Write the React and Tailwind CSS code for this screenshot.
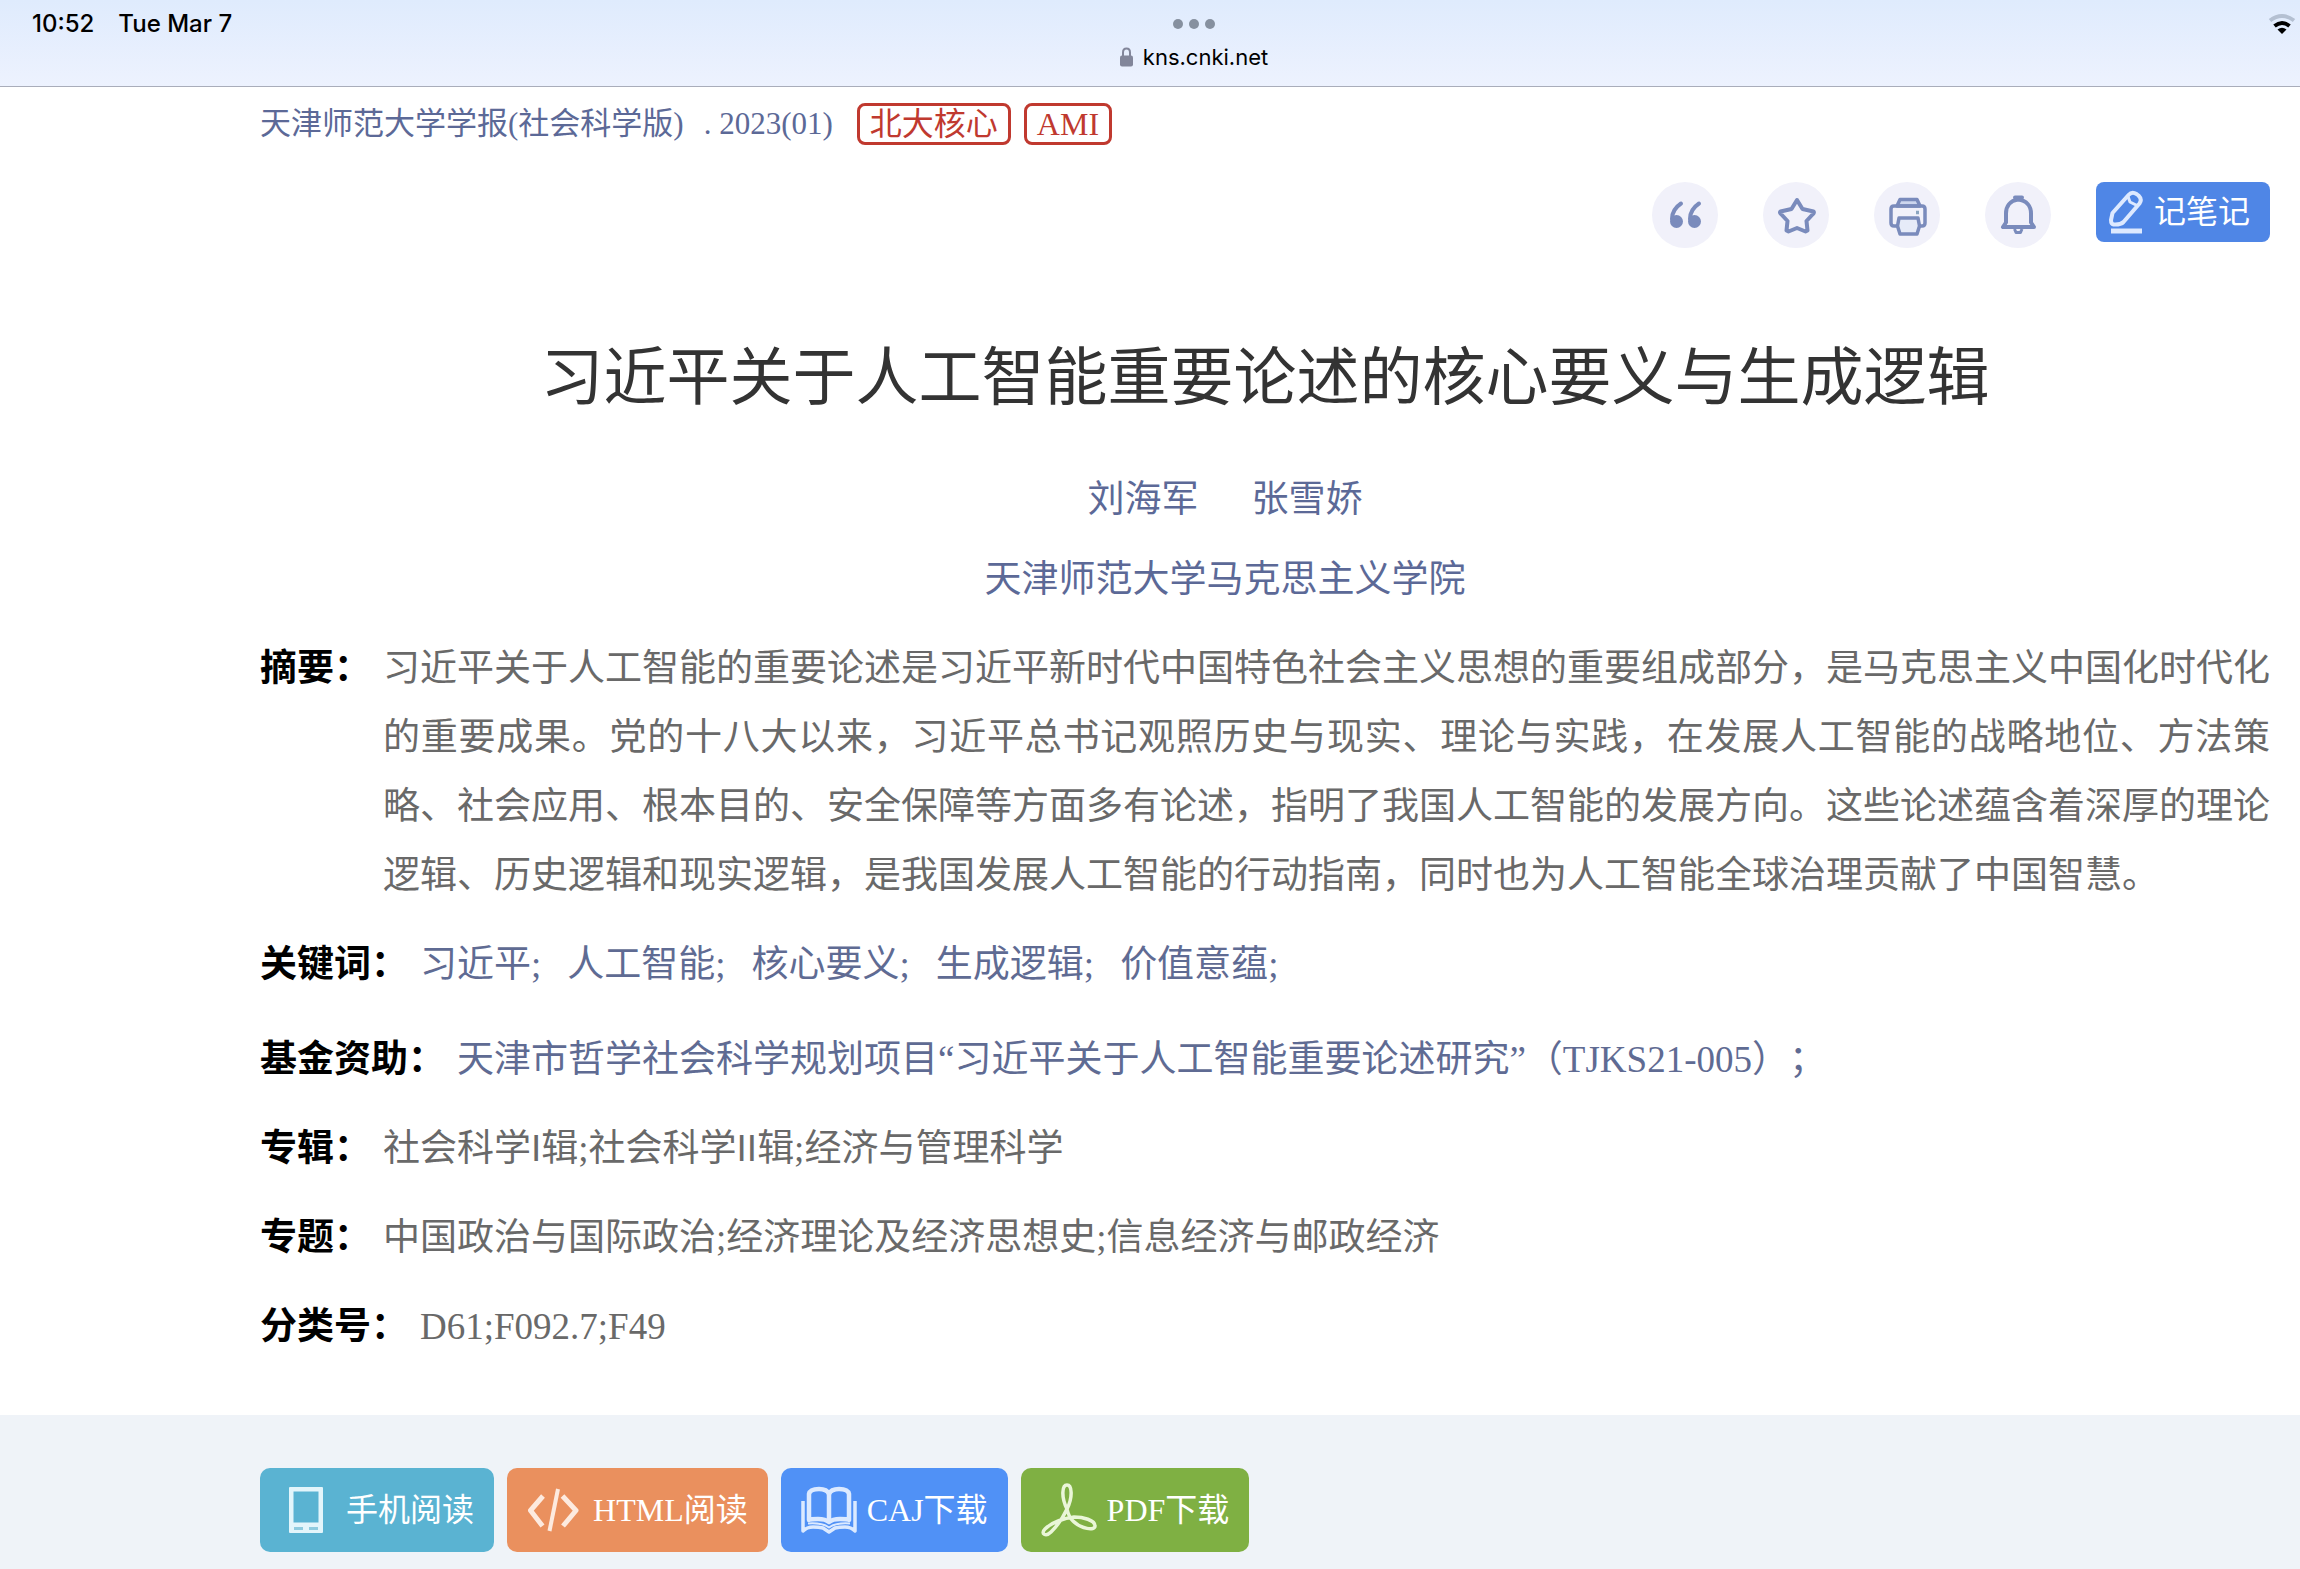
const ICON = "#7a8bbc";

// --- ICONS ---
function QuoteIcon() {
  return (
    <svg width="66" height="66" viewBox="0 0 66 66" fill="none" stroke={ICON} aria-hidden="true">
      <path d="M29 21.500c-6 4-9 9-9 15.500" strokeWidth="4" strokeLinecap="round" />
      <path d="M47 21.500c-6 4-9 9-9 15.500" strokeWidth="4" strokeLinecap="round" />
      <circle cx="24.500" cy="39.500" r="6.500" fill={ICON} stroke="none" />
      <circle cx="42.500" cy="39.500" r="6.500" fill={ICON} stroke="none" />
    </svg>
  );
}

function StarIcon() {
  return (
    <svg width="66" height="66" viewBox="0 0 66 66" fill="none" stroke={ICON} strokeWidth="4" strokeLinejoin="round" aria-hidden="true">
      <path d="M34 18l5.500 9 11 2.500q1 1-.5 2.500l-6.500 7 1 9.500-2 1L34 46l-8.500 3.500-2-1 1-9.500L18 32q-1.500-1.500-.5-2.500l11-2.500z" />
    </svg>
  );
}

function PrintIcon() {
  return (
    <svg width="66" height="66" viewBox="0 0 66 66" fill="none" stroke={ICON} strokeWidth="3.500" strokeLinejoin="round" aria-hidden="true">
      <path d="M23 24l3-6.500h17l3 6.500z" fill="#cdd6ee" />
      <path d="M23 44h-3q-3 0-3-3V27q0-3 3-3h28q3 0 3 3v14q0 3-3 3h-3" />
      <path d="M25 36h19l1.500 8-2.500 8H26l-2.500-8z" fill="#e6ebf8" />
      <path d="M42 30.500h3" stroke="#8ba5c0" />
    </svg>
  );
}

function BellIcon() {
  return (
    <svg width="66" height="66" viewBox="0 0 66 66" fill="none" stroke={ICON} strokeWidth="4" strokeLinejoin="round" aria-hidden="true">
      <path d="M33 17.500c-8 1-12 7-12 14v9l-3 4.500h31l-3-4.500v-9c0-7-4-13-13-14z" />
      <path d="M30 15.500h7" strokeLinecap="round" />
      <path d="M29.500 47l1.500 3.500h4.500L37 47" strokeWidth="3" />
    </svg>
  );
}

function NoteIcon() {
  return (
    <svg width="36" height="44" viewBox="0 0 36 44" fill="none" stroke="#dde9ff" strokeWidth="4" strokeLinejoin="round" aria-hidden="true">
      <path d="M3 30l1.500-7L20.500 5q3.500-4 8-1l2 1.500q4 4 1 8L15.500 32q-3 3-10 2.500Q3 34 3 30z" />
      <path d="M20 6.500l2 5.500 7 3.500" strokeWidth="3" />
      <path d="M3 41h31" strokeWidth="5" />
    </svg>
  );
}

function PhoneIcon() {
  return (
    <svg width="36" height="48" viewBox="0 0 36 48" aria-hidden="true">
      <path fillRule="evenodd" fill="#e3f5fb" d="M2 1h32q1 0 1 1v44q0 1-1 1H2q-1 0-1-1V2q0-1 1-1zM5.500 5.500v31h25v-31z" />
      <path d="M6 42.500h9M21 42.500h9" stroke="#8fcbdf" strokeWidth="3" />
    </svg>
  );
}

function CodeIcon() {
  return (
    <svg width="52" height="44" viewBox="0 0 52 44" fill="none" stroke="#fdeadf" strokeWidth="5" strokeLinejoin="round" aria-hidden="true">
      <path d="M16 8L3.500 22.500 15.500 38M35.500 8L49 22.500 36 38" />
      <path d="M31 1l-8.500 42" strokeWidth="4" />
    </svg>
  );
}

function BookIcon() {
  return (
    <svg width="56" height="48" viewBox="0 0 56 48" fill="none" stroke="#dceaff" strokeWidth="3" strokeLinejoin="round" aria-hidden="true">
      <path d="M28 8q-2-5-10-5-9 0-10 5v26q1.500-1 9-1t11 3q3.500-3 11-3t9 1V8q-1-5-10-5-8 0-10 5z" strokeWidth="4.500" />
      <path d="M28 7v29" strokeWidth="4.500" />
      <path d="M2 15v30q4-4 10-4t10 1l6 4 6-4q4-1 10-1t10 4V15" strokeWidth="3.500" />
      <path d="M7 37.500q14-1 21 4 7-5 21-4" strokeWidth="2" />
    </svg>
  );
}

function PdfIcon() {
  return (
    <svg width="56" height="54" viewBox="0 0 56 54" fill="none" stroke="#eaf6d8" strokeWidth="3.500" strokeLinejoin="round" aria-hidden="true">
      <path d="M26 26C20 14 21 2 26 2s6 12 0 24C22 35 16 43 10 49c-5 5-11 2-6-3 7-7 20-11 29-12 9 0 21 3 21 9 0 5-14 3-22-5-3-3-5-7-6-12z" />
    </svg>
  );
}

function LockIcon() {
  return (
    <svg width="13" height="20" viewBox="0 0 13 20" fill="none" aria-hidden="true">
      <path d="M3 9V5.500Q3 1.500 6.500 1.500T10 5.500V9" stroke="#82869a" strokeWidth="2" />
      <rect y="8.500" width="13" height="11" rx="2" fill="#82869a" />
    </svg>
  );
}

function WifiIcon() {
  return (
    <svg width="28" height="22" viewBox="0 0 28 22" fill="none" strokeWidth="4" aria-hidden="true">
      <path d="M2 7.500q12-9 24 0" stroke="#b4c0d2" />
      <path d="M6.500 13q7.500-6 15 0" stroke="#000" />
      <path d="M9.500 16.500q4.500-3.500 9 0L14 21z" fill="#000" />
    </svg>
  );
}

// --- DATA ---
const tools = [
  { label: "引用", Icon: QuoteIcon },
  { label: "收藏", Icon: StarIcon },
  { label: "打印", Icon: PrintIcon },
  { label: "订阅", Icon: BellIcon },
];

const keywords = ["习近平", "人工智能", "核心要义", "生成逻辑", "价值意蕴"];

const downloads = [
  { text: "手机阅读", Icon: PhoneIcon, style: "bg-[#5ab3d2] pl-7 pr-5 gap-[22px]" },
  { text: "HTML阅读", Icon: CodeIcon, style: "bg-[#ea905e] px-5 gap-3.5" },
  { text: "CAJ下载", Icon: BookIcon, style: "bg-[#5091f6] px-5 gap-2.5" },
  { text: "PDF下载", Icon: PdfIcon, style: "bg-[#7fb043] px-5 gap-2.5" },
];

function Row({ label, className = "", children }) {
  return (
    <div className={`flex gap-3 leading-[69px] ${className}`}>
      <dt className="shrink-0 font-bold text-black">{label}：</dt>
      <dd className="min-w-0 flex-1">{children}</dd>
    </div>
  );
}

// --- MAIN APP ---
function App() {
  return (
    <div lang="zh-CN" className="flex min-h-screen flex-col bg-white font-['Liberation_Serif','Noto_Sans_CJK_SC',sans-serif] [text-spacing-trim:space-all]">
      {/* Status bar */}
      <header className="grid h-[87px] grid-cols-[1fr_auto_1fr] border-b border-[#a9adba] bg-gradient-to-b from-[#dfebfd] to-[#edf2fe] font-['Inter',sans-serif] text-2xl leading-8 font-medium text-black">
        <div className="flex gap-6 pt-2 pl-8">
          <span>10:52</span>
          <span>Tue Mar 7</span>
        </div>
        <div className="flex flex-col items-center pt-[19px] pl-[88px]">
          <div className="flex gap-[6px]">
            <span className="size-[10px] rounded-full bg-[#86909f]" />
            <span className="size-[10px] rounded-full bg-[#86909f]" />
            <span className="size-[10px] rounded-full bg-[#86909f]" />
          </div>
          <div className="mt-3 flex items-center gap-[10px] text-[22px] font-normal">
            <LockIcon />
            <span>kns.cnki.net</span>
          </div>
        </div>
        <div className="flex justify-end pt-[13px] pr-1">
          <WifiIcon />
        </div>
      </header>

      <main className="pr-[30px] pb-[54px] pl-[260px]">
        {/* Source */}
        <div className="flex items-center pt-4 text-[#5c6997]">
          <div className="flex gap-5 text-[31px] leading-[42px]">
            <a href="#journal">天津师范大学学报(社会科学版)</a>
            <a href="#issue">. 2023(01)</a>
          </div>
          <div className="ml-6 flex gap-[13px] text-[32px] leading-9 text-[#c0392f]">
            <span className="rounded-lg border-3 border-[#c0392f] px-[10px]">北大核心</span>
            <span className="rounded-lg border-3 border-[#c0392f] px-[10px]">AMI</span>
          </div>
        </div>

        {/* Tools */}
        <div className="mt-[37px] flex items-start justify-end gap-[45px]">
          {tools.map(({ label, Icon }) => (
            <button key={label} type="button" aria-label={label} className="size-[66px] rounded-full bg-[#f1f1fa]">
              <Icon />
            </button>
          ))}
          <button type="button" className="flex h-[60px] items-center gap-2.5 rounded-lg bg-[#4f86e6] pr-5 pl-3 text-[32px] text-white">
            <NoteIcon />
            记笔记
          </button>
        </div>

        <h1 className="mt-[86px] text-center text-[63px] leading-[88px] text-[#333]">
          习近平关于人工智能重要论述的核心要义与生成逻辑
        </h1>

        <div className="pr-20 text-center text-[37px] leading-[80px] text-[#5c6997]">
          <div className="mt-[38px] flex justify-center gap-[53px]">
            <a href="#author-1">刘海军</a>
            <a href="#author-2">张雪娇</a>
          </div>
          <a href="#institute">天津师范大学马克思主义学院</a>
        </div>

        {/* Details */}
        <dl className="mt-[14px] text-[37px] text-[#696969]">
          <Row label="摘要">
            <p className="text-justify">
              习近平关于人工智能的重要论述是习近平新时代中国特色社会主义思想的重要组成部分，是马克思主义中国化时代化的重要成果。党的十八大以来，习近平总书记观照历史与现实、理论与实践，在发展人工智能的战略地位、方法策略、社会应用、根本目的、安全保障等方面多有论述，指明了我国人工智能的发展方向。这些论述蕴含着深厚的理论逻辑、历史逻辑和现实逻辑，是我国发展人工智能的行动指南，同时也为人工智能全球治理贡献了中国智慧。
            </p>
          </Row>
          <Row label="关键词" className="mt-5">
            <div className="flex gap-[26px] text-[#5f6b93]">
              {keywords.map((word) => (
                <a key={word} href="#keyword">{word};</a>
              ))}
            </div>
          </Row>
          <Row label="基金资助" className="mt-[26px]">
            <a href="#fund" className="text-[#5f6b93]">
              天津市哲学社会科学规划项目“习近平关于人工智能重要论述研究”（TJKS21-005）；
            </a>
          </Row>
          <Row label="专辑" className="mt-5">
            社会科学<span className="font-['Liberation_Sans',sans-serif]">I</span>辑;社会科学
            <span className="font-['Liberation_Sans',sans-serif]">II</span>辑;经济与管理科学
          </Row>
          <Row label="专题" className="mt-5">中国政治与国际政治;经济理论及经济思想史;信息经济与邮政经济</Row>
          <Row label="分类号" className="mt-5">D61;F092.7;F49</Row>
        </dl>
      </main>

      {/* Downloads */}
      <footer className="flex flex-1 items-start gap-[13px] bg-[#eff3f8] pt-[53px] pb-[18px] pl-[260px]">
        {downloads.map(({ text, Icon, style }) => (
          <button key={text} type="button" className={`flex h-[84px] items-center rounded-[10px] text-[32px] text-white ${style}`}>
            <Icon />
            {text}
          </button>
        ))}
      </footer>
    </div>
  );
}

export default App;
